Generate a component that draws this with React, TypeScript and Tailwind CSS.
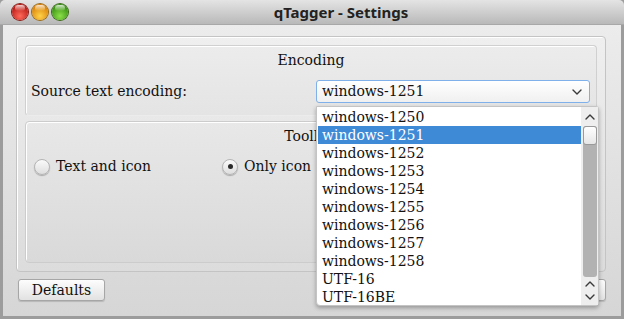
import React from 'react'

const serif = { fontFamily: '"DejaVu Serif", "Liberation Serif", serif' }

const encodings = [
  'windows-1250',
  'windows-1251',
  'windows-1252',
  'windows-1253',
  'windows-1254',
  'windows-1255',
  'windows-1256',
  'windows-1257',
  'windows-1258',
  'UTF-16',
  'UTF-16BE',
]

const Light: React.FC<{ from: string; to: string; edge: string }> = ({ from, to, edge }) => (
  <div
    className="relative h-[16px] w-[16px] rounded-full"
    style={{ background: `radial-gradient(circle at 50% 75%, ${from} 0%, ${to} 80%)`, boxShadow: `0 0 0 1px ${edge}` }}
  >
    <div className="absolute left-[3px] top-[1px] h-[6px] w-[10px] rounded-full bg-gradient-to-b from-white/80 to-white/0" />
  </div>
)

const Chevron: React.FC<{ up?: boolean; className?: string }> = ({ up, className }) => (
  <svg width="10" height="6" viewBox="0 0 10 6" className={className}>
    <path
      d={up ? 'M1 5 L5 1 L9 5' : 'M1 1 L5 5 L9 1'}
      fill="none"
      stroke="#3a3a3a"
      strokeWidth="1.4"
      strokeLinecap="round"
      strokeLinejoin="round"
    />
  </svg>
)

const Radio: React.FC<{ label: string; checked?: boolean; className?: string }> = ({ label, checked, className }) => (
  <div className={`flex items-center gap-[6px] ${className ?? ''}`}>
    <div className="flex h-[16px] w-[16px] items-center justify-center rounded-full border border-[#b4b4b4] bg-gradient-to-b from-[#fafafa] to-[#dedede] shadow-[0_1px_1px_rgba(0,0,0,0.25)]">
      {checked ? <div className="h-[5px] w-[5px] rounded-full bg-[#2a2a2a]" /> : null}
    </div>
    <span className="text-[14px] text-[#111]">{label}</span>
  </div>
)

const Button: React.FC<{ label: string; className?: string }> = ({ label, className }) => (
  <button
    type="button"
    className={`flex h-[22px] w-[87px] items-center justify-center rounded-[3px] border border-[#a6a6a6] bg-gradient-to-b from-[#fdfdfd] to-[#e2e2e2] text-[14px] text-[#111] shadow-[0_1px_1px_rgba(0,0,0,0.15)] ${className ?? ''}`}
  >
    {label}
  </button>
)

export default function App() {
  return (
    <div className="relative flex h-[319px] w-[624px] flex-col overflow-hidden bg-[#9c9c9c]" style={serif}>
      {/* title bar */}
      <div className="relative flex h-[25px] shrink-0 items-center justify-center rounded-t-[5px] border-b border-[#a8a8a8] bg-gradient-to-b from-[#e4e4e4] to-[#b9b9b9] pl-[58px]">
        <div className="absolute left-[12px] top-[4px] flex gap-[4px]">
          <Light from="#ff6a5c" to="#b3120c" edge="#8a1a14" />
          <Light from="#ffd24a" to="#d77a00" edge="#9a6a10" />
          <Light from="#8de04a" to="#2f8a0a" edge="#3a6a14" />
        </div>
        <span
          className="text-[15px] font-bold text-[#222]"
          style={{ fontFamily: '"Noto Sans", "Open Sans", sans-serif' }}
        >
          qTagger - Settings
        </span>
      </div>

      {/* body */}
      <div className="mx-[3px] mb-[3px] flex flex-1 flex-col bg-gradient-to-b from-[#ececec] to-[#d6d6d6] pl-[13px] pr-[15px] pt-[11px]">
        <div className="flex h-[236px] flex-col gap-[5px] rounded-[4px] border border-[#c4c4c4] bg-gradient-to-b from-[#efefef] to-[#dcdcdc] p-[8px] shadow-[inset_1px_1px_0_#fff]">
          {/* Encoding group */}
          <div className="flex h-[71px] flex-col rounded-[4px] border border-[#d0d0d0] border-b-transparent bg-gradient-to-b from-[#ececec] to-[#e4e4e4] px-[5px] pt-[4px] shadow-[inset_1px_1px_0_#fff]">
            <div className="text-center text-[14px] text-[#111]">Encoding</div>
            <div className="mt-[9px] flex items-center justify-between">
              <span className="text-[14px] text-[#111]">Source text encoding:</span>
              <div className="mr-[1px] flex h-[23px] w-[274px] items-center justify-between rounded-[3px] border border-[#7fb0ea] bg-gradient-to-b from-white to-[#f0f0f0] pl-[5px] pr-[7px]">
                <span className="text-[14px] text-[#111]">windows-1251</span>
                <Chevron />
              </div>
            </div>
          </div>

          {/* Toolbar group */}
          <div className="flex flex-1 flex-col rounded-[4px] border border-[#cccccc] bg-gradient-to-b from-[#e8e8e8] to-[#d9d9d9] px-[8px] pt-[4px] shadow-[inset_1px_1px_0_#fff]">
            <div className="text-center text-[14px] text-[#111]">Toolbar</div>
            <div className="mt-[9px] flex">
              <Radio label="Text and icon" className="w-[188px]" />
              <Radio label="Only icon" checked className="w-[188px]" />
              <Radio label="Only text" />
            </div>
          </div>
        </div>

        <div className="mt-[7px] flex items-center justify-between pl-[2px]">
          <Button label="Defaults" />
          <Button label="Close" />
        </div>
      </div>

      {/* open combo popup */}
      <div className="absolute left-[316px] top-[106px] flex h-[200px] w-[283px] rounded-b-[4px] rounded-tr-[3px] border border-[#c4c4c4] bg-white shadow-[0_2px_4px_rgba(0,0,0,0.3)]">
        <div className="flex-1 pl-px pt-px">
          {encodings.map(e => (
            <div
              key={e}
              className={`flex h-[18px] items-center pl-[4px] text-[14px] ${
                e === 'windows-1251' ? 'bg-[#3f8ad6] text-white' : 'text-[#111]'
              }`}
            >
              {e}
            </div>
          ))}
        </div>
        <div className="flex w-[17px] flex-col items-center bg-[#eeeeee] py-[2px]">
          <div className="flex h-[16px] items-center">
            <Chevron up />
          </div>
          <div className="mt-[1px] flex w-[14px] flex-1 flex-col rounded-[3px] bg-[#b2b2b2]">
            <div className="h-[19px] rounded-[3px] border border-[#9a9a9a] bg-gradient-to-b from-white to-[#e6e6e6]" />
          </div>
          <div className="flex h-[14px] items-center">
            <Chevron up />
          </div>
          <div className="flex h-[12px] items-center">
            <Chevron />
          </div>
        </div>
      </div>
    </div>
  )
}
